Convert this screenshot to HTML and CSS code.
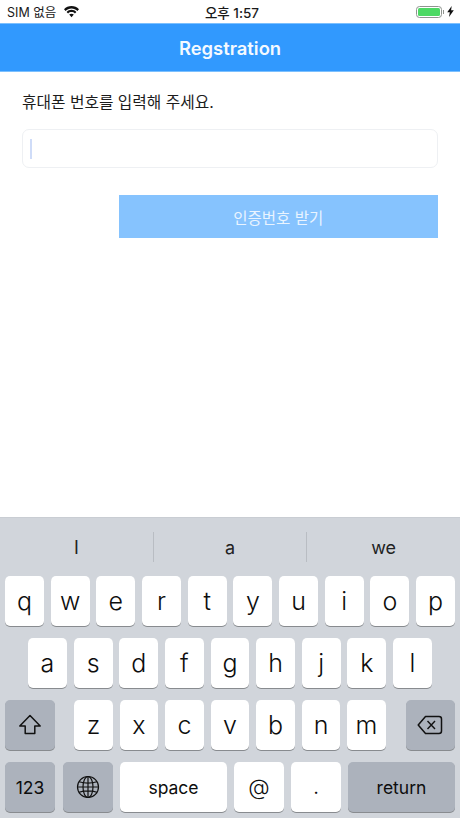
FILE: index.html
```html
<!DOCTYPE html>
<html lang="ko">
<head>
<meta charset="utf-8">
<title>Regstration</title>
<link rel="stylesheet" href="styles.css">
</head>
<body>
<div class="screen">
  <div class="status">
    <div class="status-left">
      <span>SIM 없음</span>
      <svg class="wifi" width="17" height="12" viewBox="0 0 16 12"><path d="M8 2.500c2.300 0 4.400.9 5.900 2.400l1.600-1.700C13.500 1.200 10.900 0 8 0S2.500 1.200.5 3.200l1.600 1.700C3.600 3.400 5.700 2.500 8 2.500z"/><path d="M8 6.100c1.300 0 2.500.5 3.400 1.400l1.500-1.600C11.600 4.600 9.900 3.800 8 3.800S4.400 4.600 3.100 5.900l1.500 1.600C5.500 6.600 6.700 6.100 8 6.100z"/><path d="M8 7.700c-.9 0-1.700.4-2.300.9L8 11.200l2.300-2.600c-.6-.5-1.400-.9-2.300-.9z"/></svg>
    </div>
    <div class="status-time">오후 1:57</div>
    <div class="status-right">
      <div class="battery"><div class="battery-fill"></div></div>
      <div class="battery-nub"></div>
      <svg class="bolt" width="7" height="11" viewBox="0 0 7 11"><path d="M4.700 0 .2 6.300h2.600L2 11l4.800-6.800H4.100z"/></svg>
    </div>
  </div>
  <header class="nav">Regstration</header>
  <main class="content">
    <p class="label">휴대폰 번호를 입력해 주세요.</p>
    <div class="field"><span class="caret"></span></div>
    <div class="actions"><div class="submit">인증번호 받기</div></div>
  </main>
  <section class="keyboard">
    <div class="suggestions">
      <div class="suggestion">I</div>
      <div class="suggestion">a</div>
      <div class="suggestion">we</div>
    </div>
    <div class="rows">
      <div class="row row-top">
        <div class="key">q</div><div class="key">w</div><div class="key">e</div><div class="key">r</div><div class="key">t</div><div class="key">y</div><div class="key">u</div><div class="key">i</div><div class="key">o</div><div class="key">p</div>
      </div>
      <div class="row row-mid">
        <div class="key">a</div><div class="key">s</div><div class="key">d</div><div class="key">f</div><div class="key">g</div><div class="key">h</div><div class="key">j</div><div class="key">k</div><div class="key">l</div>
      </div>
      <div class="row row-third">
        <div class="key key-dark key-side">
          <svg width="24" height="22" viewBox="0 0 24 22"><path d="M12 1.500 1.800 12h5.400v7.500h9.600V12h5.400z" fill="none" stroke="#111" stroke-width="1.500" stroke-linejoin="round"/></svg>
        </div>
        <div class="letters">
          <div class="key">z</div><div class="key">x</div><div class="key">c</div><div class="key">v</div><div class="key">b</div><div class="key">n</div><div class="key">m</div>
        </div>
        <div class="key key-dark key-side">
          <svg width="26" height="20" viewBox="0 0 26 20"><path d="M8.500 1.500H22a2.500 2.500 0 0 1 2.500 2.500v12a2.500 2.500 0 0 1-2.500 2.500H8.500L1.200 10z" fill="none" stroke="#111" stroke-width="1.500" stroke-linejoin="round"/><path d="M10.500 6l7.500 8M18 6l-7.500 8" fill="none" stroke="#111" stroke-width="1.400"/></svg>
        </div>
      </div>
      <div class="row row-bottom">
        <div class="key key-dark key-small key-fn">123</div>
        <div class="key key-dark key-fn key-globe">
          <svg width="24" height="24" viewBox="0 0 24 24" fill="none" stroke="#111" stroke-width="1.200"><circle cx="12" cy="12" r="10.500"/><ellipse cx="12" cy="12" rx="5" ry="10.500"/><path d="M12 1.500v21M1.500 12h21M3 6.700c5 1.600 13 1.600 18 0M3 17.300c5-1.600 13-1.600 18 0"/></svg>
        </div>
        <div class="key key-small key-space">space</div>
        <div class="key key-fn key-at">@</div>
        <div class="key key-fn key-dot">.</div>
        <div class="key key-dark key-small key-return">return</div>
      </div>
    </div>
  </section>
</div>
</body>
</html>
```
FILE: styles.css
```css
* { box-sizing: border-box; }
html, body { margin: 0; padding: 0; }
body {
  width: 460px;
  height: 818px;
  overflow: hidden;
  background: #fff;
  font-family: "Inter", "Liberation Sans", "Noto Sans CJK KR", sans-serif;
  color: #111;
}
.screen { display: flex; flex-direction: column; height: 818px; }

.status {
  height: 23px;
  flex: none;
  display: grid;
  grid-template-columns: 1fr auto 1fr;
  align-items: center;
  padding: 0 6px 0 7px;
  font-size: 12.500px;
  color: #1a1a1a;
}
.status-left { display: flex; align-items: center; gap: 7px; }
.wifi { fill: #111; }
.status-time { font-weight: 500; font-size: 13.500px; padding-left: 3px; }
.status-right { display: flex; align-items: center; justify-content: flex-end; }
.battery {
  width: 26px;
  height: 12px;
  border: 1px solid #8f948f;
  border-radius: 3.500px;
  padding: 1px;
}
.battery-fill { height: 100%; background: #4cd964; border-radius: 1.500px; }
.battery-nub { width: 1.500px; height: 4px; background: #8f948f; margin-left: 1px; margin-right: 3px; }
.bolt { fill: #111; }

.nav {
  height: 49px;
  flex: none;
  background: #3199fe;
  border-top: 1px solid #7cc0fe;
  border-bottom: 1px solid #7cc0fe;
  color: #f4f9ff;
  display: flex;
  align-items: center;
  justify-content: center;
  font-size: 18.400px;
  font-weight: 600;
}

.content { flex: 1; padding: 20px 22.500px 0 22px; }
.label { margin: 0; font-size: 15.750px; line-height: 22px; color: #1c1c1c; }
.field {
  margin-top: 15px;
  height: 39px;
  border: 1px solid #eef0f3;
  border-radius: 7px;
  background: #fff;
  padding: 9px 7px;
}
.caret { display: block; width: 2px; height: 20px; background: #cfdcf8; }
.actions { display: flex; justify-content: flex-end; margin-top: 27px; }
.submit {
  width: 318.500px;
  height: 43px;
  background: #86c3fe;
  color: #e9f4ff;
  display: flex;
  align-items: center;
  justify-content: center;
  font-size: 15.500px;
}

.keyboard {
  height: 301px;
  flex: none;
  background: #d1d5db;
  border-top: 1px solid #c9cdd3;
}
.suggestions { display: flex; height: 44px; padding-top: 14px; }
.suggestion {
  flex: 1;
  height: 30px;
  display: flex;
  align-items: center;
  justify-content: center;
  font-size: 18px;
  font-weight: 400;
  color: #222;
  border-left: 1px solid #b9bdc3;
}
.suggestion:first-child { border-left: 0; }

.rows { display: flex; flex-direction: column; gap: 12px; padding: 14px 5px 0; }
.row { display: flex; gap: 6.670px; height: 50px; }
.row-mid { padding: 0 23px; }
.row-third { justify-content: space-between; gap: 0; }
.letters { display: flex; gap: 6.670px; width: 312px; }

.key {
  flex: 1;
  min-width: 0;
  background: #fff;
  border-radius: 5px;
  box-shadow: 0 1px 0 #888b8f;
  display: flex;
  align-items: center;
  justify-content: center;
  font-size: 25px;
  color: #0d0d0d;
  font-weight: 300;
}
.key-dark { background: #acb2bc; }
.key-side { flex: none; width: 49.500px; }
.key-small { font-size: 17.500px; font-weight: 400; }
.key-fn { flex: none; width: 50px; }
.key-globe { margin-left: 1px; }
.key-at { font-size: 22px; }
.key-dot { font-size: 18px; font-weight: 400; }
.key-space { flex: none; width: 107px; }
.key-return { flex: none; width: 107px; }
.row-bottom { gap: 7px; }
```
